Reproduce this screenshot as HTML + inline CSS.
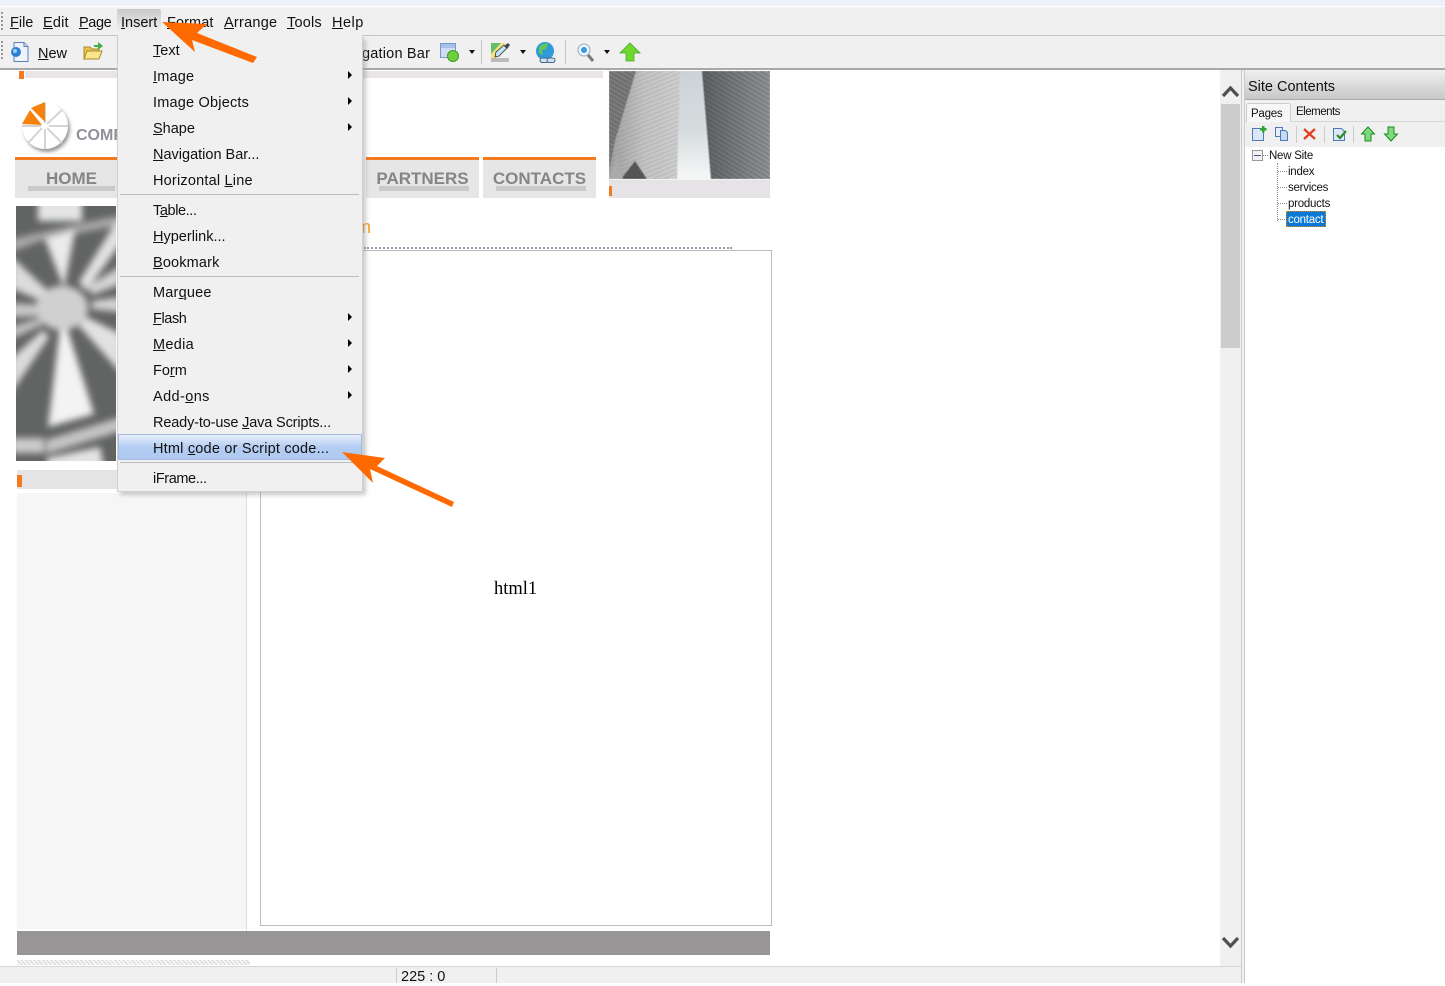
<!DOCTYPE html>
<html><head><meta charset="utf-8"><style>
html,body{margin:0;padding:0;background:#fff}
body{width:1445px;height:983px;position:relative;overflow:hidden;font-family:"Liberation Sans",sans-serif;color:#111}
.a{position:absolute}
.t{position:absolute;white-space:nowrap;font-size:14.5px;line-height:18px}
u{text-underline-offset:1px;text-decoration-thickness:1px}
.m{position:absolute;left:35px;white-space:nowrap;font-size:14.5px;line-height:18px}
.sm{position:absolute;white-space:nowrap;font-size:11.5px;line-height:14px;color:#111;letter-spacing:-.25px}
.arr{position:absolute;left:230px;width:0;height:0;border-left:4px solid #000;border-top:4px solid transparent;border-bottom:4px solid transparent}
.sep{position:absolute;left:2px;width:239px;height:1px;background:#bdbdbd}
.nav{position:absolute;top:157px;height:41px;background:#e6e6e6;border-top:3px solid #f47a20;box-sizing:border-box;font-weight:bold;color:#858585;font-size:17px;text-align:center;line-height:38px}
.nav i{position:absolute;left:13px;right:10px;top:26px;height:5px;background:#c9c9c9}
</style></head><body>
<div class="a" style="left:0;top:0;width:1445px;height:6px;background:#edf2fa"></div>
<div class="a" style="left:0;top:6px;width:1445px;height:1px;background:#fff"></div>
<div class="a" style="left:0;top:7px;width:1445px;height:28px;background:#f0f0f0"></div>
<div class="a" style="left:0;top:35px;width:1445px;height:1px;background:#c4c4c4"></div>
<div class="a" style="left:0;top:36px;width:1445px;height:32px;background:#f0f0f0"></div>
<div class="a" style="left:0;top:68px;width:1445px;height:2px;background:#a8a8a8"></div>
<div class="a" style="left:1px;top:12px;width:2px;height:20px;background:repeating-linear-gradient(#999 0 2px,#f0f0f0 2px 4px)"></div>
<div class="a" style="left:1px;top:41px;width:2px;height:20px;background:repeating-linear-gradient(#999 0 2px,#f0f0f0 2px 4px)"></div>

<div class="t" style="left:10px;top:14px"><u>F</u>ile</div>
<div class="t" style="left:43px;top:14px;letter-spacing:.2px"><u>E</u>dit</div>
<div class="t" style="left:79px;top:14px;letter-spacing:-.4px"><u>P</u>age</div>
<div class="a" style="left:117px;top:9px;width:44px;height:24px;background:linear-gradient(#c9c9c9,#f2f2f2);border-radius:2px 2px 0 0"></div>
<div class="t" style="left:121px;top:14px"><u>I</u>nsert</div>
<div class="t" style="left:167px;top:14px;letter-spacing:.1px"><u>F</u>ormat</div>
<div class="t" style="left:224px;top:14px;letter-spacing:.25px"><u>A</u>rrange</div>
<div class="t" style="left:287px;top:14px;letter-spacing:.2px"><u>T</u>ools</div>
<div class="t" style="left:332px;top:14px;letter-spacing:.5px"><u>H</u>elp</div>

<svg class="a" style="left:10px;top:41px" width="22" height="22" viewBox="0 0 22 22"><path d="M4 1.500h10l4 4v15H4z" fill="#eef3fb" stroke="#5b7fb8"/><path d="M14 1.500v4h4" fill="#cfdcf0" stroke="#5b7fb8"/><circle cx="6" cy="11" r="5" fill="#2d7fd3"/><circle cx="5" cy="10" r="2" fill="#9fd0f5"/></svg>
<div class="t" style="left:38px;top:45px"><u>N</u>ew</div>
<svg class="a" style="left:82px;top:42px" width="22" height="20" viewBox="0 0 22 20"><path d="M2 17V5h6l2 2h7v10z" fill="#e8c34e" stroke="#a78a2a"/><path d="M2 17l3-8h15l-3 8z" fill="#fbe58a" stroke="#a78a2a"/><path d="M12 3h4V0l5 4-5 4V5h-4z" fill="#44b044"/></svg>

<div class="t" style="left:362px;top:45px;letter-spacing:.2px">gation Bar</div>
<svg class="a" style="left:439px;top:42px" width="24" height="22" viewBox="0 0 24 22"><rect x="1.500" y="1.500" width="15" height="14" fill="#cfdcf5" stroke="#7b96c8"/><rect x="2" y="2" width="14" height="4" fill="#a8bfe8"/><circle cx="14" cy="14" r="5.500" fill="#6fcf3f" stroke="#3c9a1c"/></svg>
<div class="a" style="left:469px;top:50px;border-top:4px solid #111;border-left:3px solid transparent;border-right:3px solid transparent"></div>
<div class="a" style="left:481px;top:40px;width:1px;height:24px;background:#c4c4c4"></div>
<svg class="a" style="left:490px;top:42px" width="22" height="22" viewBox="0 0 22 22"><path d="M1 1h14l-6 10 -2 5H1z" fill="#f6e27a"/><path d="M1 1h10L1 12z" fill="#63c06a"/><path d="M5 15l1-5 8-7 3 3-8 8z" fill="#bfe3f7" stroke="#333" stroke-width=".8"/><path d="M14 4l4-3 2 2-3 4z" fill="#444"/><rect x="1" y="16" width="18" height="4" fill="#bbb"/></svg>
<div class="a" style="left:520px;top:50px;border-top:4px solid #111;border-left:3px solid transparent;border-right:3px solid transparent"></div>
<svg class="a" style="left:535px;top:41px" width="24" height="24" viewBox="0 0 24 24"><circle cx="10" cy="10" r="9" fill="#2f9bd8"/><path d="M4 6q5-5 9-3l-2 5-4 1 1 5-4-2z" fill="#63c75a"/><rect x="5" y="17" width="8" height="4.500" rx="2.200" fill="#cfe3f2" stroke="#47627e"/><rect x="12" y="17" width="8" height="4.500" rx="2.200" fill="#cfe3f2" stroke="#47627e"/></svg>
<div class="a" style="left:565px;top:40px;width:1px;height:24px;background:#c4c4c4"></div>
<svg class="a" style="left:576px;top:42px" width="20" height="22" viewBox="0 0 20 22"><path d="M12 13l5 6" stroke="#777" stroke-width="3"/><circle cx="8" cy="8" r="6" fill="#eaf5fd" stroke="#9ab"/><circle cx="8" cy="8" r="3" fill="#3b9be0"/></svg>
<div class="a" style="left:604px;top:50px;border-top:4px solid #111;border-left:3px solid transparent;border-right:3px solid transparent"></div>
<svg class="a" style="left:619px;top:42px" width="22" height="20" viewBox="0 0 22 20"><path d="M11 1l10 10h-6v8H7v-8H1z" fill="#6fd82f" stroke="#4aa52a" stroke-width=".8"/></svg>

<!-- page -->
<div class="a" style="left:19px;top:71px;width:5px;height:8px;background:#f47a20"></div>
<div class="a" style="left:25px;top:71px;width:578px;height:7px;background:#e8e4e8"></div>
<svg class="a" style="left:16px;top:98px" width="60" height="56" viewBox="0 0 60 56"><defs><filter id="b" x="-20%" y="-20%" width="140%" height="140%"><feGaussianBlur stdDeviation="1.800"/></filter></defs>
<circle cx="31" cy="31" r="23" fill="#9a9a9a" filter="url(#b)"/>
<circle cx="29" cy="28" r="23" fill="#fff"/>
<g stroke="#d4d4d4" stroke-width="2"><path d="M29 26V5M31 26L46 12M33 28H52M31 30L46 45M29 31V51M26 30L12 45M25 28H6"/></g>
<circle cx="29" cy="28" r="3" fill="#fff"/>
<path d="M6 26L14 12 26 27z" fill="#f6820d"/><path d="M15 10L29 4V24z" fill="#f6820d"/></svg>
<div class="a" style="left:76px;top:127px;font-size:16px;font-weight:bold;color:#90909a;line-height:18px;width:41px;overflow:hidden;white-space:nowrap">COMPANY</div>
<div class="nav" style="left:15px;width:110px"><span style="position:absolute;left:31px">HOME</span><i></i></div>
<div class="nav" style="left:366px;width:113px">PARTNERS<i></i></div>
<div class="nav" style="left:483px;width:113px">CONTACTS<i></i></div>

<svg class="a" style="left:609px;top:71px" width="161" height="127" viewBox="0 0 161 127"><defs>
<linearGradient id="l1" x1="0" x2="1"><stop offset="0" stop-color="#a0a0a0"/><stop offset=".5" stop-color="#c4c4c4"/><stop offset="1" stop-color="#cfcfcf"/></linearGradient>
<pattern id="st" width="4" height="4" patternUnits="userSpaceOnUse" patternTransform="rotate(-22)"><rect width="4" height="1" fill="#555" opacity=".2"/></pattern>
<pattern id="st2" width="4" height="4" patternUnits="userSpaceOnUse" patternTransform="rotate(30)"><rect width="4" height="1" fill="#222" opacity=".3"/></pattern>
<linearGradient id="sky" x1="0" y1="0" x2="0" y2="1"><stop offset="0" stop-color="#ccd2d6"/><stop offset=".55" stop-color="#d6dcde"/><stop offset="1" stop-color="#f6f7f7"/></linearGradient>
<linearGradient id="rt" x1="0" x2="1"><stop offset="0" stop-color="#5e6163"/><stop offset=".45" stop-color="#75797b"/><stop offset="1" stop-color="#8f9496"/></linearGradient>
<filter id="bb"><feGaussianBlur stdDeviation=".5"/></filter></defs>
<rect width="161" height="108" fill="#ccc"/>
<rect x="60" width="50" height="108" fill="url(#sky)"/>
<g filter="url(#bb)">
<path d="M0 0H71L68 108H0z" fill="url(#l1)"/><path d="M0 0H71L68 108H0z" fill="url(#st)"/>
<path d="M0 0H27L6 70 0 100z" fill="#7b7b7b"/><path d="M0 0H27L6 70 0 100z" fill="url(#st2)"/>
<path d="M12 108L26 90 38 108z" fill="#555"/><path d="M0 108L8 85 14 108z" fill="#aaa"/>
<path d="M93 0H161V108H102z" fill="url(#rt)"/><path d="M93 0H161V108H102z" fill="url(#st2)"/></g>
<rect y="108" width="161" height="1" fill="#f2f2f2"/>
<rect y="109" width="161" height="18" fill="#e6e3e7"/><rect y="115" width="3" height="10" fill="#f47a20"/></svg>

<div class="a" style="left:356px;top:217px;font-size:18px;line-height:20px;color:#f79a2a">m</div>
<div class="a" style="left:364px;top:247px;width:368px;height:0;border-top:2px dotted #9a9ab0"></div>

<svg class="a" style="left:16px;top:206px" width="100" height="255" viewBox="0 0 100 255"><defs><filter id="d" x="-20%" y="-20%" width="140%" height="140%"><feGaussianBlur stdDeviation="3.500"/></filter><clipPath id="c"><rect width="100" height="255"/></clipPath></defs>
<g clip-path="url(#c)"><rect width="100" height="255" fill="#626463"/>
<g filter="url(#d)">
<path d="M22 -6H66V15H22z" fill="#e4e5e4"/>
<path d="M-5 33L100 10V20L27 34-5 46z" fill="#a8a8a8"/>
<path d="M29 33L59 24 48 82z" fill="#eaebea"/>
<path d="M-5 50L32 85 26 95-5 82z" fill="#dcdcdc"/>
<path d="M-5 97L26 99V110L-5 111z" fill="#c8c8c8"/>
<path d="M-5 121L25 112 26 119-5 133z" fill="#c2c2c2"/>
<path d="M-5 153L27 124 33 131-5 187z" fill="#dcdcdc"/>
<path d="M105 8L63 76 70 85 105 37z" fill="#e2e2e2"/>
<path d="M105 60L72 80 76 89 105 78z" fill="#d4d4d4"/>
<path d="M105 91L76 95V103L105 106z" fill="#d4d4d4"/>
<path d="M105 128L70 111 63 120 105 167z" fill="#e2e2e2"/>
<path d="M44 122H51L78 208 32 221z" fill="#f2f3f2"/>
<ellipse cx="46" cy="102" rx="26" ry="22" fill="#d0d0d0"/>
<path d="M-5 232H28V247H-5z" fill="#cbcbcb"/>
<path d="M30 234L105 211V225L30 248z" fill="#c4c4c4"/>
<path d="M31 252L84 241 88 262H31z" fill="#e4e4e4"/></g></g></svg>

<div class="a" style="left:17px;top:470px;width:100px;height:19px;background:#e4e4e4"></div>
<div class="a" style="left:17px;top:475px;width:5px;height:12px;background:#f47a20"></div>
<div class="a" style="left:17px;top:493px;width:229px;height:436px;background:#f6f6f6"></div>
<div class="a" style="left:246px;top:490px;width:1px;height:441px;background:#ddd"></div>
<div class="a" style="left:260px;top:250px;width:510px;height:674px;border:1px solid #bdbdbd"></div>
<div class="a" style="left:494px;top:579px;font-family:'Liberation Serif',serif;font-size:18.500px;line-height:20px;color:#000">html1</div>
<div class="a" style="left:17px;top:931px;width:753px;height:24px;background:#979595"></div>
<div class="a" style="left:17px;top:960px;width:233px;height:5px;background:repeating-linear-gradient(45deg,#d8d8d8 0 1px,#f6f6f6 1px 3px)"></div>

<!-- status -->
<div class="a" style="left:0;top:966px;width:1243px;height:17px;background:#f0f0f0;border-top:1px solid #d6d6d6;box-sizing:border-box"></div>
<div class="a" style="left:396px;top:968px;width:1px;height:15px;background:#ccc"></div>
<div class="a" style="left:496px;top:968px;width:1px;height:15px;background:#ccc"></div>
<div class="t" style="left:401px;top:968px">225 : 0</div>

<!-- scrollbar -->
<div class="a" style="left:1220px;top:70px;width:21px;height:896px;background:#f0f0f0"></div>
<div class="a" style="left:1221px;top:104px;width:19px;height:244px;background:#cdcdcd"></div>
<svg class="a" style="left:1220px;top:82px" width="21" height="18" viewBox="0 0 21 18"><path d="M3 14L10.500 6 18 14" fill="none" stroke="#505050" stroke-width="3.200"/></svg>
<svg class="a" style="left:1220px;top:934px" width="21" height="18" viewBox="0 0 21 18"><path d="M3 4L10.500 12 18 4" fill="none" stroke="#505050" stroke-width="3.200"/></svg>
<div class="a" style="left:1241px;top:70px;width:4px;height:913px;background:#f0f0f0;border-left:1px solid #ccc;box-sizing:border-box"></div>

<!-- site contents -->
<div class="a" style="left:1244px;top:70px;width:201px;height:913px;background:#fff;border-left:1px solid #ccc;box-sizing:border-box"></div>
<div class="a" style="left:1245px;top:70px;width:200px;height:30px;background:linear-gradient(#f0f0f0,#c8c8c8);border-bottom:1px solid #aaa;box-sizing:border-box"></div>
<div class="t" style="left:1248px;top:78px">Site Contents</div>
<div class="a" style="left:1245px;top:100px;width:200px;height:47px;background:#f0f0f0"></div>
<div class="a" style="left:1245px;top:121px;width:200px;height:1px;background:#d9d9d9"></div>
<div class="a" style="left:1246px;top:103px;width:45px;height:19px;background:#f7f7f7;border:1px solid #ccc;border-bottom:0;border-radius:3px 3px 0 0;box-sizing:border-box"></div>
<div class="sm" style="left:1251px;top:107px">Pages</div>
<div class="sm" style="left:1296px;top:105px;letter-spacing:-.5px">Elements</div>

<svg class="a" style="left:1250px;top:125px" width="18" height="18" viewBox="0 0 18 18"><path d="M2.500 3.500h9l2 2v10h-11z" fill="#dbe6f7" stroke="#4e79b8"/><path d="M10 3h2V1h2.500v2h2v2.500h-2v2H12v-2h-2z" fill="#2da52d"/></svg>
<svg class="a" style="left:1273px;top:125px" width="18" height="18" viewBox="0 0 18 18"><path d="M2.500 2.500h7v9h-7z" fill="#e6eefb" stroke="#4e79b8"/><path d="M7.500 5.500h5l2 2v8h-7z" fill="#c7d8f2" stroke="#4e79b8"/></svg>
<div class="a" style="left:1296px;top:126px;width:1px;height:17px;background:#ccc"></div>
<svg class="a" style="left:1302px;top:126px" width="16" height="16" viewBox="0 0 16 16"><path d="M2 3l11 10M13 3L2 13" stroke="#e33c1c" stroke-width="2.200"/></svg>
<div class="a" style="left:1324px;top:126px;width:1px;height:17px;background:#ccc"></div>
<svg class="a" style="left:1331px;top:125px" width="18" height="18" viewBox="0 0 18 18"><path d="M2.500 3.500h8l3 3v9h-11z" fill="#dbe6f7" stroke="#4e79b8"/><path d="M6 10l3 3 6-7" fill="none" stroke="#2a8f2a" stroke-width="2.200"/></svg>
<div class="a" style="left:1353px;top:126px;width:1px;height:17px;background:#ccc"></div>
<svg class="a" style="left:1360px;top:126px" width="16" height="16" viewBox="0 0 16 16"><path d="M8 1l6.500 7H11v7H5V8H1.500z" fill="#7fd87f" stroke="#1c8a1c"/></svg>
<svg class="a" style="left:1383px;top:126px" width="16" height="16" viewBox="0 0 16 16"><path d="M8 15l6.500-7H11V1H5v7H1.500z" fill="#7fd87f" stroke="#1c8a1c"/></svg>

<div class="a" style="left:1252px;top:150px;width:11px;height:11px;border:1px solid #999;box-sizing:border-box;background:#f2f2f2"></div>
<div class="a" style="left:1254px;top:155px;width:7px;height:1px;background:#44598a"></div>
<div class="a" style="left:1263px;top:155px;width:5px;border-top:1px dotted #888"></div>
<div class="a" style="left:1277px;top:163px;height:58px;border-left:1px dotted #888"></div>
<div class="a" style="left:1278px;top:171px;width:9px;border-top:1px dotted #888"></div>
<div class="a" style="left:1278px;top:187px;width:9px;border-top:1px dotted #888"></div>
<div class="a" style="left:1278px;top:203px;width:9px;border-top:1px dotted #888"></div>
<div class="a" style="left:1278px;top:219px;width:9px;border-top:1px dotted #888"></div>
<div class="sm" style="left:1269px;top:149px">New Site</div>
<div class="sm" style="left:1288px;top:165px">index</div>
<div class="sm" style="left:1288px;top:181px">services</div>
<div class="sm" style="left:1288px;top:197px">products</div>
<div class="a" style="left:1286px;top:211px;width:40px;height:16px;background:#0a78d7;outline:1px dotted #e88a00;outline-offset:-1px"></div>
<div class="sm" style="left:1288px;top:213px;color:#fff">contact</div>

<!-- menu -->
<div class="a" style="left:120px;top:39px;width:246px;height:456px;background:#8a8a8a;opacity:.45;filter:blur(2px)"></div>
<div class="a" style="left:117px;top:35px;width:246px;height:457px;background:#f0f0f0;border:1px solid #d0d0d0;border-top:0;box-sizing:border-box">
<div class="m" style="top:7px"><u>T</u>ext</div>
<div class="m" style="top:33px;letter-spacing:.2px"><u>I</u>mage</div><div class="arr" style="top:36px"></div>
<div class="m" style="top:59px;letter-spacing:.2px">Image Objects</div><div class="arr" style="top:62px"></div>
<div class="m" style="top:85px"><u>S</u>hape</div><div class="arr" style="top:88px"></div>
<div class="m" style="top:111px"><u>N</u>avigation Bar...</div>
<div class="m" style="top:137px;letter-spacing:.2px">Horizontal <u>L</u>ine</div>
<div class="sep" style="top:159px"></div>
<div class="m" style="top:167px;letter-spacing:-.4px">T<u>a</u>ble...</div>
<div class="m" style="top:193px"><u>H</u>yperlink...</div>
<div class="m" style="top:219px;letter-spacing:.15px"><u>B</u>ookmark</div>
<div class="sep" style="top:241px"></div>
<div class="m" style="top:249px;letter-spacing:.2px">Mar<u>q</u>uee</div>
<div class="m" style="top:275px;letter-spacing:-.4px"><u>F</u>lash</div><div class="arr" style="top:278px"></div>
<div class="m" style="top:301px;letter-spacing:.3px"><u>M</u>edia</div><div class="arr" style="top:304px"></div>
<div class="m" style="top:327px"><span>Fo<u>r</u>m</span></div><div class="arr" style="top:330px"></div>
<div class="m" style="top:353px;letter-spacing:.4px">Add-<u>o</u>ns</div><div class="arr" style="top:356px"></div>
<div class="m" style="top:379px;letter-spacing:-.15px">Ready-to-use <u>J</u>ava Scripts...</div>
<div class="a" style="left:0;top:399px;width:244px;height:26px;box-sizing:border-box;border:1px solid #a6bcdf;background:linear-gradient(#e6eefb,#b4cdf2 50%,#b0c9f0)"></div>
<div class="m" style="top:405px;letter-spacing:.2px">Html <u>c</u>ode or Script code...</div>
<div class="sep" style="top:427px"></div>
<div class="m" style="top:435px;letter-spacing:-.4px">iFrame...</div>
</div>

<!-- orange arrows -->
<svg class="a" style="left:0;top:0" width="1445" height="983" viewBox="0 0 1445 983"><path d="M162 22L207 24 197 33 257 57 253 63 192 40 195 52z" fill="#fe6a00"/><path d="M342 452L385 458 377 466 454 502 452 507 370 469 373 483z" fill="#fe6a00"/></svg>
</body></html>
